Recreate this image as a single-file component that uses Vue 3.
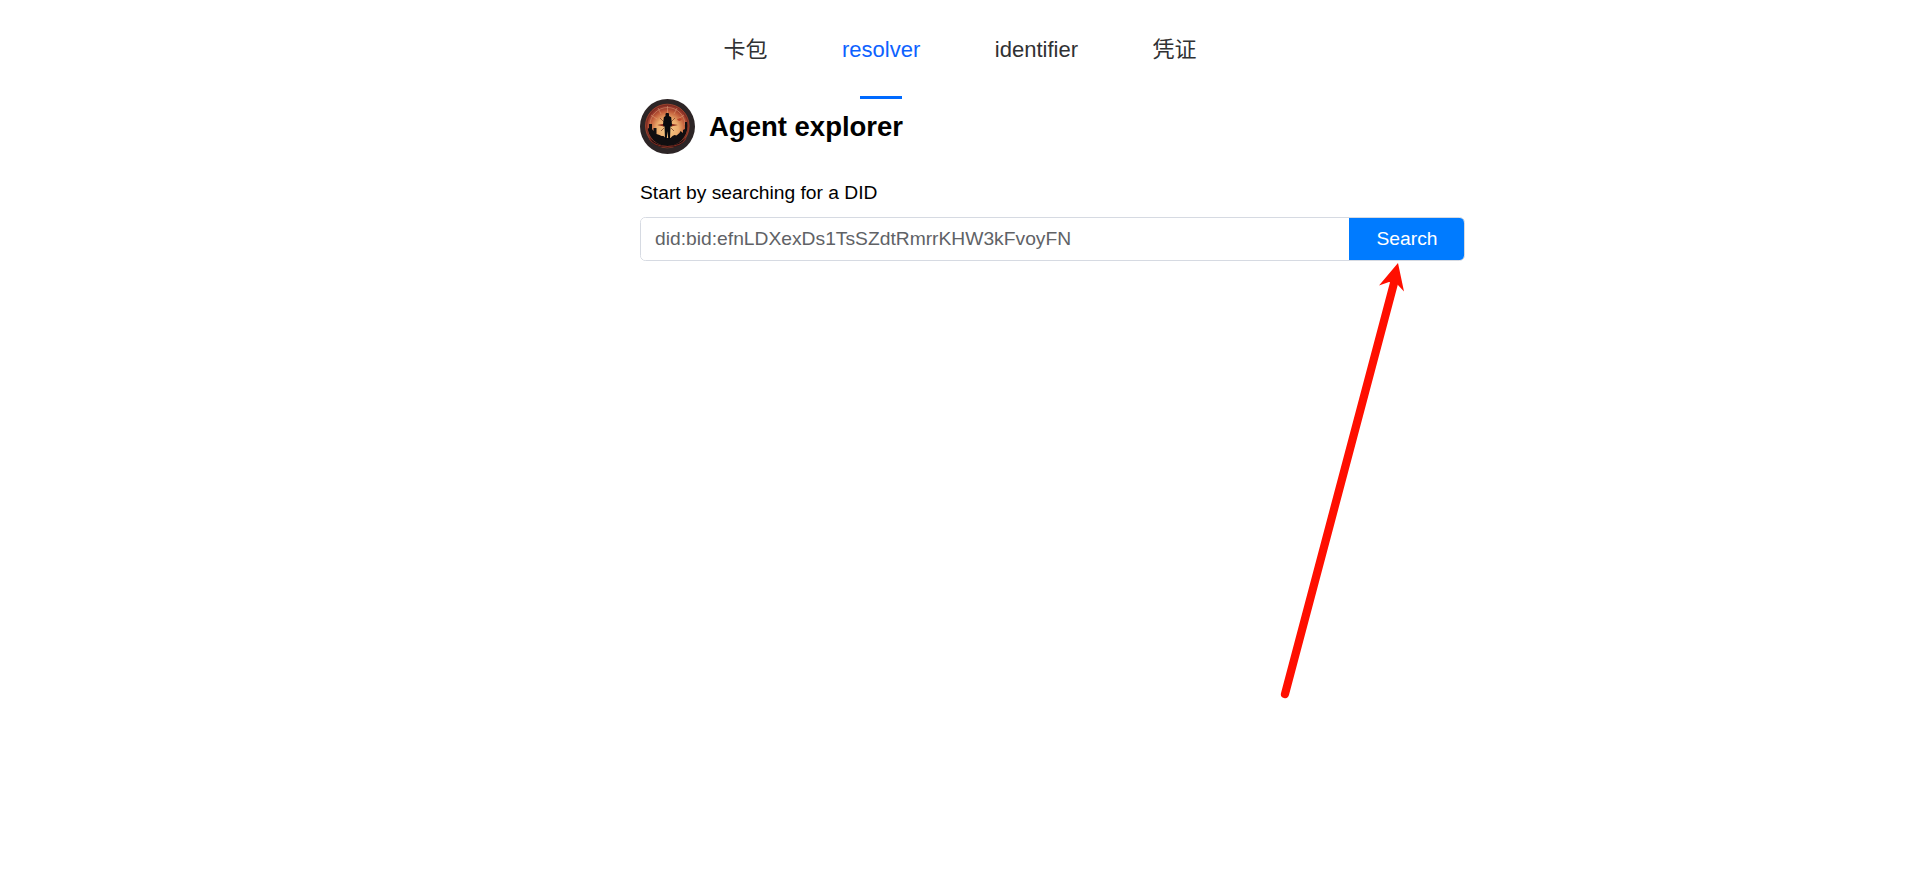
<script setup>
import { ref } from 'vue'

const tabs = ['卡包', 'resolver', 'identifier', '凭证']
const active = ref('resolver')
const did = ref('did:bid:efnLDXexDs1TsSZdtRmrrKHW3kFvoyFN')
</script>

<template>
  <div class="page">
    <nav class="tabs">
      <a v-for="tab in tabs" :key="tab" class="tab" :class="{ active: tab === active }" @click="active = tab">{{ tab }}</a>
    </nav>
    <main class="content">
      <header class="brand">
        <svg class="avatar" viewBox="0 0 55 55">
          <defs>
            <radialGradient id="sun" cx="50%" cy="58%" r="54%">
              <stop offset="0" stop-color="#f8cf8c" />
              <stop offset="0.5" stop-color="#ecac6c" />
              <stop offset="0.8" stop-color="#c4603c" />
              <stop offset="1" stop-color="#97362a" />
            </radialGradient>
            <clipPath id="dial"><circle cx="27.5" cy="27" r="20" /></clipPath>
          </defs>
          <circle cx="27.5" cy="27.5" r="27.5" fill="#2d2526" />
          <circle cx="27.3" cy="27" r="21.8" fill="#7c2c22" stroke="#a9472f" stroke-width="0.8" />
          <circle cx="27.5" cy="27" r="20.3" fill="url(#sun)" />
          <g fill="none" stroke="#e8b386" stroke-width="0.6" opacity="0.75">
            <path d="M10 26A17.5 17.5 0 0 1 45 26" />
            <path d="M27.5 7V14M18 9l3 6M37 9l-3 6M11 16l6 4M44 16l-6 4" />
          </g>
          <g clip-path="url(#dial)" fill="#100e10">
            <path d="M7 30l2-1v-4h3v5l1.500 2v-3h3v6l3 1 2 1h2l2 2h5l2-2 2-1 2 .5 3-2.500 1-2 2.500 2v-3l2-1v-7h3v26H7z" />
          </g>
          <path d="M9.500 39Q27 55 45.500 39Q42 48.500 27.500 48.500Q13 48.500 9.500 39" fill="#100e10" />
          <path d="M9 39.500Q14 47.500 27.500 47.500Q41 47.500 46 39.500" fill="none" stroke="#7f2a20" stroke-width="1.200" />
          <path d="M17 26l7-1.200v2.600zM38 26l-7-1.200v2.600z" fill="#8a2b1c" />
          <path d="M20 19l4 4M35 19l-4 4M21 32l3-3M34 32l-3-3" stroke="#6b3424" stroke-width="0.700" />
          <path d="M37 20l3-1 2 1-2 2-2-.5z" fill="#b84329" />
          <path d="M26 14h2.500l.5 1v2l2.200 1.200 .8 7.500-.8 2-.7-.5-.5 13h-1.700l-.8-8-.8 8h-1.700l-.5-13-.7.500-.8-2 .8-7.500L25.500 17v-2z" fill="#080a0d" />
        </svg>
        <h1>Agent explorer</h1>
      </header>
      <p class="hint">Start by searching for a DID</p>
      <div class="search">
        <input v-model="did" type="text" spellcheck="false" />
        <button type="button">Search</button>
      </div>
    </main>
    <svg class="arrow" viewBox="0 0 140 440">
      <path d="M15 434L124.300 22" stroke="#ff0f00" stroke-width="8.2" stroke-linecap="round" />
      <path d="M128 3L109 25.500L119 22L127 24L134 31.500z" fill="#ff0f00" />
    </svg>
  </div>
</template>

<style>
body {
  margin: 0;
  background: #fff;
}
</style>

<style scoped>
.page {
  position: relative;
  height: 869px;
  overflow: hidden;
  font-family: "Liberation Sans", Arial, "Noto Sans CJK SC", sans-serif;
  font-size: 19.25px;
  color: #000;
}
.tabs {
  display: flex;
  justify-content: center;
  gap: 74.5px;
  height: 99px;
}
.tab {
  position: relative;
  height: 99px;
  line-height: 99px;
  font-size: 22px;
  color: #303133;
  cursor: pointer;
}
.tab.active {
  color: #0d62ff;
}
.tab.active::after {
  content: "";
  position: absolute;
  bottom: 0;
  left: 50%;
  width: 42px;
  height: 3px;
  margin-left: -21px;
  background: #006aff;
}
.content {
  width: 825px;
  margin-left: 640px;
}
.brand {
  display: flex;
  align-items: center;
  gap: 14px;
  height: 55px;
}
.avatar {
  width: 55px;
  height: 55px;
}
h1 {
  margin: 0;
  font-size: 27.5px;
  line-height: 32px;
}
.hint {
  margin: 28px 0 13px;
  line-height: 22px;
}
.search {
  display: flex;
  box-sizing: border-box;
  height: 44px;
  border: 1.375px solid #d6dae2;
  border-radius: 5.5px;
  overflow: hidden;
}
input {
  flex: 1;
  min-width: 0;
  padding: 0 14px;
  border: 0;
  outline: 0;
  background: #fff;
  font: inherit;
  color: #606266;
}
button {
  width: 115px;
  padding: 0 0 0 1px;
  border: 0;
  background: #007bff;
  font: inherit;
  color: #fff;
}
.arrow {
  position: absolute;
  left: 1270px;
  top: 260px;
  width: 140px;
  height: 440px;
  pointer-events: none;
}
</style>
